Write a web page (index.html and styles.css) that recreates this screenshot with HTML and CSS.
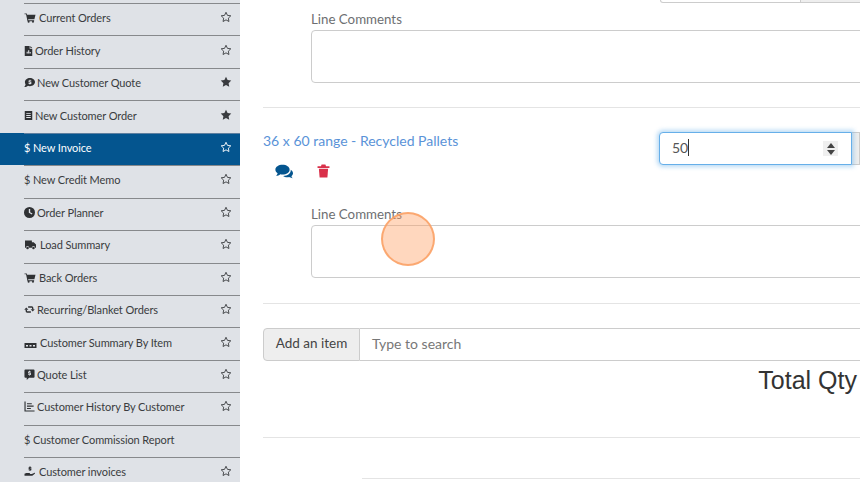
FILE: index.html
```html
<!DOCTYPE html>
<html lang="en">
<head>
<meta charset="utf-8">
<title>New Invoice</title>
<link rel="stylesheet" href="styles.css">
</head>
<body>
<svg class="defs" width="0" height="0" aria-hidden="true">
  <symbol id="star" viewBox="0 0 24 24"><path d="M12 2.500l2.900 6.200 6.700.9-4.900 4.700 1.200 6.700-5.900-3.300-5.900 3.300 1.200-6.700-4.900-4.700 6.700-.9z" fill="none" stroke="currentColor" stroke-width="1.800" stroke-linejoin="round"/></symbol>
  <symbol id="star-solid" viewBox="0 0 24 24"><path d="M12 1.500l3.200 6.700 7.300 1-5.300 5.100 1.300 7.300-6.500-3.500-6.500 3.500 1.300-7.300-5.300-5.100 7.300-1z" fill="currentColor"/></symbol>
  <symbol id="cart" viewBox="0 0 24 24"><path d="M0 3h5l.7 3H24l-2.400 10H8l.4 2H21v2H6.500L3.400 5H0z" fill="currentColor"/><circle cx="9" cy="21.500" r="2.200" fill="currentColor"/><circle cx="18.500" cy="21.500" r="2.200" fill="currentColor"/></symbol>
  <symbol id="file" viewBox="0 0 24 24"><path d="M2 0h13v7h7v24H2z" fill="currentColor"/><path d="M17 0l5 5h-5z" fill="currentColor"/><path d="M7 20h3v-5H7zM11 20h3v-9h-3zM15 20h3v-4h-3z" fill="#dfe2e7"/></symbol>
  <symbol id="quote" viewBox="0 0 24 24"><path d="M13 2c6 0 11 4 11 9s-5 9-11 9c-1.500 0-3-.2-4.300-.7C7 21 4 22 .5 22c1.500-1.500 2.700-3.500 3-5.500C2.400 15 2 13 2 11c0-5 5-9 11-9z" fill="currentColor"/><path d="M12 6h2v1.500h2v1.800h-3.500v1H16V15h-2v1.500h-2V15h-2v-1.800h3.500v-1H10V7.500h2z" fill="#dfe2e7"/></symbol>
  <symbol id="order" viewBox="0 0 24 24"><path d="M2 0h20v24H2z" fill="currentColor"/><path d="M6 5h12v2.500H6zM6 10.500h12V13H6zM6 16h12v2.500H6z" fill="#dfe2e7"/></symbol>
  <symbol id="clock" viewBox="0 0 24 24"><circle cx="12" cy="12" r="12" fill="currentColor"/><path d="M10.500 4.500h3v6.800l5 3-1.400 2.300-6.600-4z" fill="#dfe2e7"/></symbol>
  <symbol id="truck" viewBox="0 0 24 24"><path d="M0 3h15v4h4l5 5v7h-2a3.500 3.500 0 0 0-7 0H9a3.500 3.500 0 0 0-7 0H0z" fill="currentColor"/><circle cx="5.500" cy="19.500" r="2.800" fill="currentColor"/><circle cx="18.500" cy="19.500" r="2.800" fill="currentColor"/></symbol>
  <symbol id="retweet" viewBox="0 0 24 24"><path d="M19 12V8.500a2 2 0 0 0-2-2H9" fill="none" stroke="currentColor" stroke-width="3"/><path d="M14.500 11.500h9L19 16.500z" fill="currentColor"/><path d="M5 12v3.500a2 2 0 0 0 2 2h8" fill="none" stroke="currentColor" stroke-width="3"/><path d="M.5 12.500h9L5 7.500z" fill="currentColor"/></symbol>
  <symbol id="pallet" viewBox="0 0 24 12"><path d="M0 2h24v10H0z" fill="currentColor"/><path d="M3 6h4v3H3zM10 6h4v3h-4zM17 6h4v3h-4z" fill="#dfe2e7"/></symbol>
  <symbol id="bubble" viewBox="0 0 24 24"><path d="M3 1h18a2 2 0 0 1 2 2v14a2 2 0 0 1-2 2H11l-5 5v-5H3a2 2 0 0 1-2-2V3a2 2 0 0 1 2-2z" fill="currentColor"/><path d="M11 4h2v1.200h2V7h-3.500v1.200H15V13h-2v1.200h-2V13H9v-1.800h3.500V10H9V5.200h2z" fill="#dfe2e7"/></symbol>
  <symbol id="history" viewBox="0 0 24 24"><path d="M1 1h2.500v19.500H23V23H1z" fill="currentColor"/><path d="M6.500 5H17v2.300H6.500zM6.500 10H21v2.300H6.500zM6.500 15H15v2.300H6.500z" fill="currentColor"/></symbol>
  <symbol id="hand" viewBox="0 0 24 24"><path d="M0 17l4-2h7c1.500 0 2 2 0 2.500l-3 .2 8-.2 5-2.500c1.500-.5 2.500 1 1.500 2l-5.500 4.500H0z" fill="currentColor"/><path d="M10.500 1h3v1.500h1.500v1.800h-3v.8h3V9h-1.500v1.500h-3V9H9V7.200h3v-.7H9V2.500h1.500z" fill="currentColor"/></symbol>
  <symbol id="comments" viewBox="0 1 24 20"><path d="M10 2c5.200 0 9.500 2.800 9.500 6.500S15.200 15 10 15c-1 0-2-.1-2.900-.3C5.500 16 3.500 16.700 1.500 16.800c1-1 1.800-2.300 2-3.500C1.700 12.100.5 10.400.5 8.500.5 4.800 4.800 2 10 2z" fill="currentColor"/><path d="M21 8.800c1.800 1.100 3 2.700 3 4.500 0 1.500-.8 2.900-2.100 3.900.2 1 .8 2 1.600 2.800-1.700 0-3.300-.6-4.500-1.600-.9.200-1.700.3-2.600.3-2.200 0-4.200-.6-5.600-1.700 5.800.1 10.700-3.200 10.200-8.200z" fill="currentColor"/></symbol>
  <symbol id="trash" viewBox="0 0 24 24"><path d="M8.500 0h7l1.200 3H23v3.500H1V3h6.300z" fill="currentColor"/><path d="M3.500 8h17l-1.300 16H4.800z" fill="currentColor"/></symbol>
</svg>

<div class="app">
  <nav class="sidebar">
    <ul class="menu">
      <li class="menu-item"><a class="menu-row"><span class="menu-label"><svg class="ico ico-wide"><use href="#cart"/></svg>Current Orders</span><svg class="star"><use href="#star"/></svg></a></li>
      <li class="menu-item"><a class="menu-row"><span class="menu-label"><svg class="ico ico-slim"><use href="#file"/></svg>Order History</span><svg class="star"><use href="#star"/></svg></a></li>
      <li class="menu-item"><a class="menu-row"><span class="menu-label"><svg class="ico"><use href="#quote"/></svg>New Customer Quote</span><svg class="star"><use href="#star-solid"/></svg></a></li>
      <li class="menu-item"><a class="menu-row"><span class="menu-label"><svg class="ico ico-slim"><use href="#order"/></svg>New Customer Order</span><svg class="star"><use href="#star-solid"/></svg></a></li>
      <li class="menu-item active"><a class="menu-row"><span class="menu-label">$ New Invoice</span><svg class="star"><use href="#star"/></svg></a></li>
      <li class="menu-item"><a class="menu-row"><span class="menu-label">$ New Credit Memo</span><svg class="star"><use href="#star"/></svg></a></li>
      <li class="menu-item"><a class="menu-row"><span class="menu-label"><svg class="ico"><use href="#clock"/></svg>Order Planner</span><svg class="star"><use href="#star"/></svg></a></li>
      <li class="menu-item"><a class="menu-row"><span class="menu-label"><svg class="ico ico-wider"><use href="#truck"/></svg>Load Summary</span><svg class="star"><use href="#star"/></svg></a></li>
      <li class="menu-item"><a class="menu-row"><span class="menu-label"><svg class="ico ico-wide"><use href="#cart"/></svg>Back Orders</span><svg class="star"><use href="#star"/></svg></a></li>
      <li class="menu-item"><a class="menu-row"><span class="menu-label"><svg class="ico"><use href="#retweet"/></svg>Recurring/Blanket Orders</span><svg class="star"><use href="#star"/></svg></a></li>
      <li class="menu-item"><a class="menu-row"><span class="menu-label"><svg class="ico ico-pallet"><use href="#pallet"/></svg>Customer Summary By Item</span><svg class="star"><use href="#star"/></svg></a></li>
      <li class="menu-item"><a class="menu-row"><span class="menu-label"><svg class="ico"><use href="#bubble"/></svg>Quote List</span><svg class="star"><use href="#star"/></svg></a></li>
      <li class="menu-item"><a class="menu-row"><span class="menu-label"><svg class="ico"><use href="#history"/></svg>Customer History By Customer</span><svg class="star"><use href="#star"/></svg></a></li>
      <li class="menu-item"><a class="menu-row"><span class="menu-label">$ Customer Commission Report</span></a></li>
      <li class="menu-item"><a class="menu-row"><span class="menu-label"><svg class="ico ico-wide"><use href="#hand"/></svg>Customer invoices</span><svg class="star"><use href="#star"/></svg></a></li>
    </ul>
  </nav>

  <main class="main">
    <div class="top-fields">
      <div class="top-input"></div>
      <div class="top-addon"></div>
    </div>
    <div class="comments comments-first">
      <label class="comments-label">Line Comments</label>
      <div class="textarea"></div>
    </div>
    <hr class="rule rule-a">

    <section class="line">
      <div class="line-left">
        <a class="item-link">36 x 60 range - Recycled Pallets</a>
        <div class="line-actions">
          <svg class="act act-comments"><use href="#comments"/></svg>
          <svg class="act act-trash"><use href="#trash"/></svg>
        </div>
      </div>
      <div class="qty">
        <div class="qty-input"><span class="qty-value">50</span><span class="caret"></span>
          <span class="spinner"><i class="spin-up"></i><i class="spin-down"></i></span>
        </div>
        <div class="qty-addon"></div>
      </div>
    </section>

    <div class="comments comments-second">
      <label class="comments-label">Line Comments</label>
      <div class="textarea"></div>
    </div>
    <hr class="rule rule-b">

    <div class="add-group">
      <span class="add-label">Add an item</span>
      <span class="add-input">Type to search</span>
    </div>

    <div class="total">Total Qty</div>
    <hr class="rule rule-c">
    <hr class="rule rule-d">
  </main>
</div>
<div class="click-dot"></div>
</body>
</html>
```
FILE: styles.css
```css
* { box-sizing: border-box; }
html, body { margin: 0; padding: 0; height: 482px; overflow: hidden; background: #fff; }
body { font-family: "Lato", "Liberation Sans", sans-serif; color: #333; position: relative; }
.defs { position: absolute; }
.app { display: flex; height: 482px; overflow: hidden; }

.sidebar { flex: 0 0 240px; background: #dfe2e7; padding-top: 3px; overflow: hidden; }
.menu { list-style: none; margin: 0; padding: 0; }
.menu-item { padding-left: 24px; height: 32.45px; }
.menu-row { display: flex; align-items: center; justify-content: space-between; height: 100%; border-top: 1px solid #87898c; padding: 0 8px 4px 0; font-size: 11px; letter-spacing: -0.1px; color: #3a3c40; }
.menu-label { display: flex; align-items: center; white-space: nowrap; }
.active { background: #04558f; }
.active .menu-row { color: #fff; border-top-color: #5d7fa0; }
.ico { width: 11px; height: 11px; margin-right: 2px; color: #2f3134; flex: none; }
.ico-slim { width: 9px; margin-right: 2px; }
.ico-wide { width: 12px; margin-right: 3px; }
.ico-wider { width: 13px; margin-right: 3px; }
.ico-pallet { width: 13px; height: 6px; margin-top: 6px; margin-right: 3px; }
.star { width: 12px; height: 12px; color: #3a3c40; flex: none; margin-top: -1px; }
.active .star { color: #fff; }

.main { flex: 1 1 auto; min-width: 0; padding-left: 23px; display: flex; flex-direction: column; overflow: hidden; }
.top-fields { display: flex; height: 3px; margin-left: 397px; flex: none; width: 300px; }
.top-input { width: 141px; border: 1px solid #ccc; border-top: 0; border-radius: 0 0 0 3px; }
.top-addon { flex: 1; background: #eee; border-bottom: 1px solid #ccc; }

.comments { margin-left: 48px; flex: none; width: 640px; }
.comments-first { margin-top: 8px; }
.comments-second { margin-top: 17px; }
.comments-label { display: block; font-size: 13.3px; line-height: 16px; color: #6d6f72; margin-bottom: 3px; }
.textarea { height: 53px; border: 1px solid #ccc; border-radius: 4px; background: #fff; }

.rule { border: 0; border-top: 1px solid #e4e4e4; margin: 0; flex: none; width: 597px; }
.rule-a { margin-top: 24px; }
.rule-b { margin-top: 25px; }
.rule-c { margin-top: 41px; }
.rule-d { margin-top: 40px; margin-left: 99px; width: 498px; }

.line { display: flex; justify-content: space-between; flex: none; height: 81px; padding-top: 24px; }
.line-left { display: flex; flex-direction: column; }
.item-link { font-size: 14px; line-height: 18px; color: #5a93d8; white-space: nowrap; }
.line-actions { display: flex; align-items: center; margin-top: 14px; padding-left: 12px; gap: 24px; }
.act { width: 18px; height: 15px; flex: none; }
.act-comments { color: #04558f; }
.act-trash { color: #d9304a; width: 13px; height: 14px; margin-top: -2px; }
.qty { display: flex; flex: none; height: 33px; }
.qty-input { width: 193px; height: 33px; border: 1px solid #66afe9; border-radius: 4px 0 0 4px; box-shadow: 0 0 4px 2px rgba(102,175,233,.45); padding: 0 0 2px 12px; display: flex; align-items: center; font-size: 14px; color: #555; background: #fff; position: relative; }
.caret { width: 1px; height: 17px; background: #333; }
.spinner { position: absolute; right: 13px; top: 8px; width: 15px; height: 15px; background: #efefef; display: flex; flex-direction: column; align-items: center; justify-content: center; gap: 2px; }
.spin-up { border: 4px solid transparent; border-top: 0; border-bottom: 5px solid #444; }
.spin-down { border: 4px solid transparent; border-bottom: 0; border-top: 5px solid #444; }
.qty-addon { width: 8px; background: #eee; border: 1px solid #ccc; border-left: 0; }

.add-group { display: flex; height: 33px; margin-top: 24px; flex: none; width: 640px; line-height: 29px; }
.add-label { width: 97px; background: #eee; border: 1px solid #ccc; border-radius: 4px 0 0 4px; text-align: center; color: #444; flex: none; font-size: 13.5px; }
.add-input { flex: 1; border: 1px solid #ccc; border-left: 0; padding-left: 12px; color: #777; font-size: 14px; }

.total { text-align: right; font-size: 25px; line-height: 30px; margin-top: 4px; margin-bottom: 1px; padding-right: 3px; color: #333; white-space: nowrap; flex: none; height: 30px; width: 597px; font-family: "Liberation Sans", sans-serif; }

.click-dot { position: absolute; left: 381px; top: 212px; width: 54px; height: 54px; border-radius: 50%; background: rgba(255,160,100,.42); border: 2px solid rgba(250,160,100,.85); }
```
